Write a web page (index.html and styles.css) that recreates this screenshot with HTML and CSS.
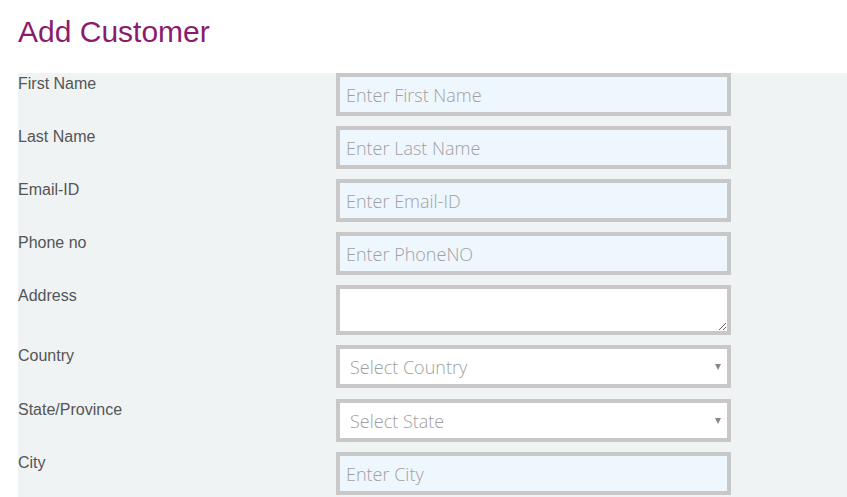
FILE: index.html
```
<!DOCTYPE html>
<html>
<head>
<meta charset="utf-8">
<link rel="stylesheet" href="styles.css">
</head>
<body>
<h1 class="title">Add Customer</h1>
<form class="panel">
  <div class="row"><label class="lbl">First Name</label><input class="field" type="text" placeholder="Enter First Name"></div>
  <div class="row"><label class="lbl">Last Name</label><input class="field" type="text" placeholder="Enter Last Name"></div>
  <div class="row"><label class="lbl">Email-ID</label><input class="field" type="text" placeholder="Enter Email-ID"></div>
  <div class="row"><label class="lbl">Phone no</label><input class="field" type="text" placeholder="Enter PhoneNO"></div>
  <div class="row"><label class="lbl">Address</label><textarea class="area"></textarea></div>
  <div class="row row-wide"><label class="lbl">Country</label><div class="selwrap"><select class="sel"><option>Select Country</option></select><span class="arrow"></span></div></div>
  <div class="row"><label class="lbl">State/Province</label><div class="selwrap"><select class="sel"><option>Select State</option></select><span class="arrow"></span></div></div>
  <div class="row"><label class="lbl">City</label><input class="field" type="text" placeholder="Enter City"></div>
</form>
</body>
</html>
```
FILE: styles.css
```
html, body {
  margin: 0;
  padding: 0;
  background: #ffffff;
  overflow: hidden;
}
.title {
  margin: 15px 0 24px 18px;
  font-family: "Liberation Sans", Arial, sans-serif;
  font-weight: normal;
  font-size: 30px;
  line-height: 34px;
  color: #8b1c6d;
}
.panel {
  margin: 0 0 0 18px;
  background: #eff3f4;
  height: 500px;
}
.row {
  display: grid;
  grid-template-columns: 318px 395px;
  margin-bottom: 10px;
}
.row-wide {
  margin-bottom: 11px;
}
.lbl {
  font-family: "Liberation Sans", Arial, sans-serif;
  font-size: 16px;
  line-height: 22px;
  color: #555555;
}
.field, .area, .sel {
  box-sizing: border-box;
  width: 395px;
  height: 43px;
  margin: 0;
  border: 4px solid #c8c8c8;
  border-radius: 0;
  outline: none;
  font-family: "Open Sans", sans-serif;
  font-weight: 300;
  font-size: 18px;
  color: #a0a0a0;
}
.field {
  background: #eff7fe;
  padding: 0 6px;
}
.field::placeholder {
  color: #a0a0a0;
}
.area {
  display: block;
  height: 50px;
  background: #ffffff;
  padding: 4px 6px;
  resize: vertical;
}
.selwrap {
  position: relative;
  width: 395px;
  height: 43px;
}
.sel {
  display: block;
  -webkit-appearance: none;
  appearance: none;
  background: #ffffff;
  padding: 0 10px;
  color: #a0a0a0;
}
.arrow {
  position: absolute;
  right: 10px;
  top: 19px;
  width: 0;
  height: 0;
  border-left: 3.5px solid transparent;
  border-right: 3.5px solid transparent;
  border-top: 6px solid #888888;
}
```
